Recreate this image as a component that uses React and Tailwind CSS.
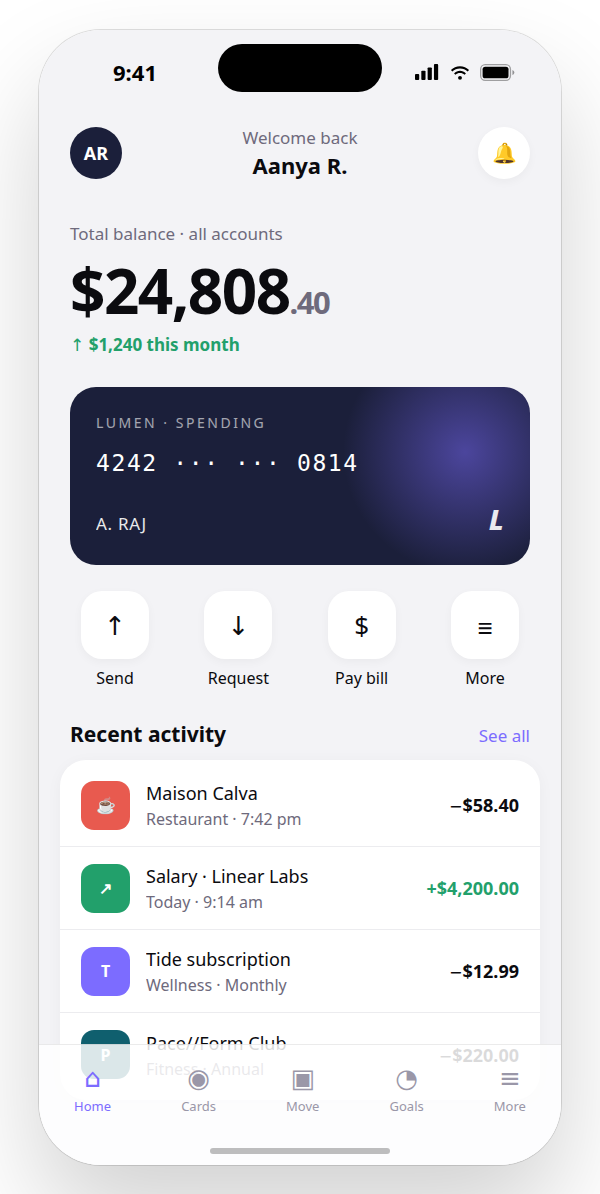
const actions = [
  { glyph: '↑', label: 'Send', font: "pt-0.5 font-['DejaVu_Sans',sans-serif]" },
  { glyph: '↓', label: 'Request', font: "pt-0.5 font-['DejaVu_Sans',sans-serif]" },
  { glyph: '$', label: 'Pay bill', font: '' },
  { glyph: '≡', label: 'More', font: "pt-1.5 font-['Liberation_Sans',sans-serif]" },
];

const activity = [
  { glyph: '☕', color: 'bg-[#e85a4f]', title: 'Maison Calva', sub: 'Restaurant · 7:42 pm', amount: '$58.40' },
  { glyph: '↗', color: 'bg-[#22a06b]', title: 'Salary · Linear Labs', sub: 'Today · 9:14 am', amount: '$4,200.00', income: true },
  { glyph: 'T', color: 'bg-[#7c6cff]', title: 'Tide subscription', sub: 'Wellness · Monthly', amount: '$12.99' },
  { glyph: 'P', color: 'bg-[#0f5f6e]', title: 'Pace//Form Club', sub: 'Fitness · Annual', amount: '$220.00' },
];

const tabs = [
  { glyph: '⌂', label: 'Home', active: true },
  { glyph: '◉', label: 'Cards' },
  { glyph: '▣', label: 'Move' },
  { glyph: '◔', label: 'Goals' },
  { glyph: '≡', label: 'More' },
];

const StatusBar = () => (
  <div className="flex h-20 items-center justify-between gap-[200px] px-[31px] pt-1 text-black">
    <span className="flex-1 text-center text-[22px] leading-7 font-bold">9:41</span>
    <div className="flex flex-1 items-center justify-center gap-[9px]">
      <svg width="25" height="16" viewBox="0 0 19 12" fill="currentColor" className="shrink-0">
        <rect x="0" y="7.5" width="3.2" height="4.5" rx="0.7" />
        <rect x="4.8" y="5" width="3.2" height="7" rx="0.7" />
        <rect x="9.6" y="2.5" width="3.2" height="9.5" rx="0.7" />
        <rect x="14.4" y="0" width="3.2" height="12" rx="0.7" />
      </svg>
      <svg width="22" height="16" viewBox="0 0 17 12" fill="currentColor" className="shrink-0">
        <path d="M8.5 3.2C10.8 3.2 12.9 4.1 14.4 5.6L15.5 4.5C13.7 2.7 11.2 1.5 8.5 1.5C5.8 1.5 3.3 2.7 1.5 4.5L2.6 5.6C4.1 4.1 6.2 3.2 8.5 3.2Z" />
        <path d="M8.5 6.8C9.9 6.8 11.1 7.3 12 8.2L13.1 7.1C11.8 5.9 10.2 5.1 8.5 5.1C6.8 5.1 5.2 5.9 3.9 7.1L5 8.2C5.9 7.3 7.1 6.8 8.5 6.8Z" />
        <circle cx="8.5" cy="10.5" r="1.5" />
      </svg>
      <svg width="35" height="17" viewBox="0 0 27 13" fill="currentColor" className="shrink-0">
        <rect x="0.5" y="0.5" width="23" height="12" rx="3.5" fill="none" stroke="currentColor" strokeOpacity="0.35" />
        <rect x="2" y="2" width="20" height="9" rx="2" />
        <path d="M25 4.5V8.5C25.8 8.2 26.5 7.2 26.5 6.5C26.5 5.8 25.8 4.8 25 4.5Z" fillOpacity="0.4" />
      </svg>
    </div>
  </div>
);

const Header = () => (
  <header className="flex items-center justify-between px-[31px] pt-4">
    <button className="size-[52px] rounded-full bg-[#1b1f3a] text-[18px] font-bold text-white">AR</button>
    <div className="text-center">
      <p className="text-[17px] leading-6 text-[#6e6a7c]">Welcome back</p>
      <h1 className="text-[22px] leading-[30px] font-bold">Aanya R.</h1>
    </div>
    <button aria-label="Notifications" className="size-[52px] rounded-full bg-white text-[20px] shadow-[0_3px_10px_rgba(0,0,0,0.04)]">
      🔔
    </button>
  </header>
);

const Balance = () => (
  <section className="px-[31px] pt-[42px]">
    <p className="text-[17px] leading-6 text-[#6e6a7c]">Total balance · all accounts</p>
    <p className="mt-[9px] text-[62px] leading-[70px] font-bold tracking-tight">
      $24,808<span className="text-[31px] leading-none text-[#6e6a7c]">.40</span>
    </p>
    <p className="mt-2 text-[17px] leading-6 font-bold text-[#22a06b]">
      <span className="font-['DejaVu_Sans',sans-serif] font-normal">↑</span> $1,240 this month
    </p>
  </section>
);

const SpendingCard = () => (
  <section className="mx-[31px] mt-[30px] rounded-[26px] bg-[#1b1f3a] bg-[radial-gradient(circle_122px_at_calc(100%_-_65px)_65px,rgba(124,108,255,0.5),transparent)] px-[26px] pt-[26px] pb-7 text-white">
    <p className="text-[14px] leading-5 tracking-[0.18em] opacity-60">LUMEN · SPENDING</p>
    <p className="mt-4 font-['DejaVu_Sans_Mono',monospace] text-[23px] leading-7 tracking-[0.07em]">4242 ··· ··· 0814</p>
    <div className="mt-6 flex items-baseline justify-between opacity-90">
      <span className="text-[17px] leading-6 tracking-[0.04em]">A. RAJ</span>
      <span className="text-[29px] leading-9 font-extrabold italic">L</span>
    </div>
  </section>
);

const QuickActions = () => (
  <div className="flex justify-between px-[42px] pt-[26px]">
    {actions.map((action) => (
      <button key={action.label} className="flex w-[68px] flex-col items-center gap-[7px] text-[16px] leading-6">
        <span className={`flex size-[68px] items-center justify-center rounded-[21px] bg-white text-[26px] shadow-[0_3px_10px_rgba(0,0,0,0.04)] ${action.font}`}>
          {action.glyph}
        </span>
        <span className="whitespace-nowrap">{action.label}</span>
      </button>
    ))}
  </div>
);

const RecentActivity = () => (
  <section className="px-[21px] pt-7">
    <div className="flex items-baseline justify-between px-[10px]">
      <h2 className="text-[21px] leading-8 font-bold">Recent activity</h2>
      <a href="#activity" className="text-[17px] leading-6 text-[#7c6cff]">See all</a>
    </div>
    <ul id="activity" className="mt-[10px] rounded-[26px] bg-white py-1 shadow-[0_3px_16px_rgba(0,0,0,0.04)]">
      {activity.map((item) => (
        <li key={item.title} className="flex h-[83px] items-center gap-4 border-b border-[#ececef] px-[21px] last:border-b-0">
          <span className={`flex size-[49px] shrink-0 items-center justify-center rounded-[13px] text-[16px] font-bold text-white ${item.color}`}>
            {item.glyph}
          </span>
          <div className="min-w-0 flex-1">
            <p className="truncate text-[18px] leading-7">{item.title}</p>
            <p className="truncate text-[16px] leading-6 text-[#6e6a7c]">{item.sub}</p>
          </div>
          <span className={`text-[18px] leading-6 font-bold ${item.income ? 'text-[#22a06b]' : ''}`}>
            {item.income ? '+' : <span className="font-['DejaVu_Sans',sans-serif] text-[16px] leading-none font-normal">−</span>}
            {item.amount}
          </span>
        </li>
      ))}
    </ul>
  </section>
);

const TabBar = () => (
  <nav className="absolute inset-x-0 bottom-0 border-t border-black/8 bg-white/85 pt-[15px] pb-[11px]">
    <div className="flex justify-around">
      {tabs.map((tab) => (
        <a key={tab.label} href={`#${tab.label.toLowerCase()}`} className={`flex flex-col items-center ${tab.active ? 'text-[#7c6cff]' : 'text-[#9a97a8]'}`}>
          <span className="font-['DejaVu_Sans',sans-serif] text-[26px] leading-9">{tab.glyph}</span>
          <span className="text-[13px] leading-5">{tab.label}</span>
        </a>
      ))}
    </div>
    <div className="mx-auto mt-8 h-[6px] w-[180px] rounded-full bg-black/25" />
  </nav>
);

const App = () => (
  <div className="flex min-h-screen bg-white px-[39px] pt-[30px] pb-[29px] font-['Noto_Sans',sans-serif] text-[#0b0b0f]">
    <div className="flex flex-1 rounded-[62px] shadow-[0_0_0_1px_rgba(0,0,0,0.12),0_52px_104px_rgba(0,0,0,0.18)]">
      <main className="relative flex-1 overflow-hidden rounded-[62px] bg-[#f3f3f6] pb-14">
        <div className="absolute top-[14px] left-1/2 h-12 w-[164px] -translate-x-1/2 rounded-full bg-black" />
        <StatusBar />
        <Header />
        <Balance />
        <SpendingCard />
        <QuickActions />
        <RecentActivity />
        <TabBar />
      </main>
    </div>
  </div>
);

export default App;
